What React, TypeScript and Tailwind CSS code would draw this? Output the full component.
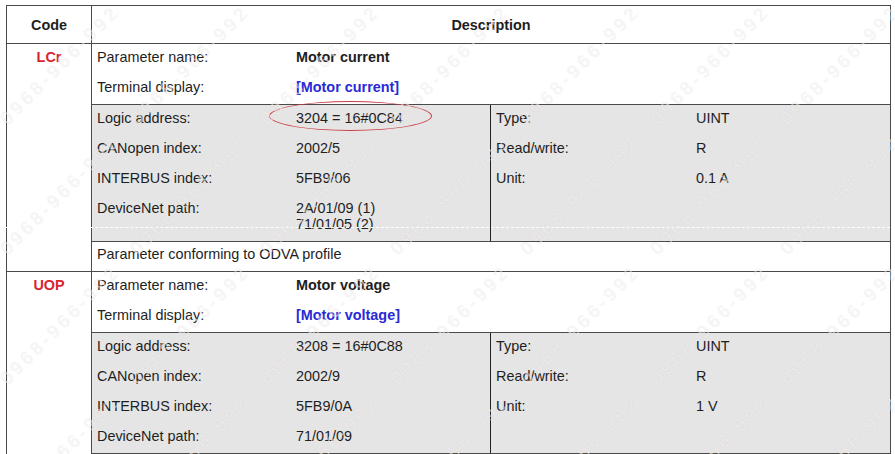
import React from "react";

type Field = { label: string; value: string[] };

type Param = {
  code: string;
  name: string;
  display: string;
  left: Field[];
  right: Field[];
  note?: string;
};

const params: Param[] = [
  {
    code: "LCr",
    name: "Motor current",
    display: "[Motor current]",
    left: [
      { label: "Logic address:", value: ["3204 = 16#0C84"] },
      { label: "CANopen index:", value: ["2002/5"] },
      { label: "INTERBUS index:", value: ["5FB9/06"] },
      { label: "DeviceNet path:", value: ["2A/01/09 (1)", "71/01/05 (2)"] },
    ],
    right: [
      { label: "Type:", value: ["UINT"] },
      { label: "Read/write:", value: ["R"] },
      { label: "Unit:", value: ["0.1 A"] },
    ],
    note: "Parameter conforming to ODVA profile",
  },
  {
    code: "UOP",
    name: "Motor voltage",
    display: "[Motor voltage]",
    left: [
      { label: "Logic address:", value: ["3208 = 16#0C88"] },
      { label: "CANopen index:", value: ["2002/9"] },
      { label: "INTERBUS index:", value: ["5FB9/0A"] },
      { label: "DeviceNet path:", value: ["71/01/09"] },
    ],
    right: [
      { label: "Type:", value: ["UINT"] },
      { label: "Read/write:", value: ["R"] },
      { label: "Unit:", value: ["1 V"] },
    ],
  },
];

function FieldRow({ field, labelWidth }: { field: Field; labelWidth: string }) {
  return (
    <div className={`flex pl-[5px] pt-[5px] ${field.value.length > 1 ? "h-[46px]" : "h-[30px]"}`}>
      <div className={labelWidth}>{field.label}</div>
      <div>
        {field.value.map((v) => (
          <div key={v}>{v}</div>
        ))}
      </div>
    </div>
  );
}

function ParamBlock({ p }: { p: Param }) {
  return (
    <div className="grid grid-cols-[85px_1fr] border-t border-[#4a4a4a]">
      <div className="border-r border-[#4a4a4a] pt-[5px] text-center font-bold text-[#d8262e]">
        {p.code}
      </div>
      <div>
        <div className="flex h-[30px] pl-[5px] pt-[5px]">
          <div className="w-[199px]">Parameter name:</div>
          <div className="font-bold">{p.name}</div>
        </div>
        <div className="flex h-[30px] pl-[5px] pt-[5px]">
          <div className="w-[199px]">Terminal display:</div>
          <div className="font-bold text-[#2a2ad6]">{p.display}</div>
        </div>
        <div className="grid grid-cols-[399px_1fr] border-t border-b border-[#4a4a4a] bg-[#e5e5e5]">
          <div className="border-r border-[#222]">
            {p.left.map((f) => (
              <FieldRow key={f.label} field={f} labelWidth="w-[199px]" />
            ))}
          </div>
          <div>
            {p.right.map((f) => (
              <FieldRow key={f.label} field={f} labelWidth="w-[200px]" />
            ))}
          </div>
        </div>
        {p.note && <div className="h-[29px] pl-[5px] pt-[4px]">{p.note}</div>}
      </div>
    </div>
  );
}

const marks: { x: number; y: number }[] = [];
for (let j = 0; j < 4; j++) {
  for (let i = 0; i < 7; i++) {
    marks.push({ x: 60 + 130 * i, y: 65 + 130 * j });
  }
}

export default function App() {
  return (
    <div className="relative h-[454px] w-[895px] overflow-hidden bg-white font-['Liberation_Sans',Arial,sans-serif] text-[14.4px] leading-[16px] text-[#1e1e1e]">
      <div className="ml-[6px] mt-[5px] w-[885px] border-l border-r border-t border-[#4a4a4a]">
        {/* header */}
        <div className="grid h-[37px] grid-cols-[85px_1fr] font-bold">
          <div className="flex items-center justify-center border-r border-[#4a4a4a]">Code</div>
          <div className="flex items-center justify-center">Description</div>
        </div>
        {params.map((p) => (
          <ParamBlock key={p.code} p={p} />
        ))}
        <div className="grid h-[20px] grid-cols-[85px_1fr] border-t border-[#4a4a4a]">
          <div className="border-r border-[#4a4a4a]" />
          <div />
        </div>
      </div>

      {/* red annotation around the logic address */}
      <div className="pointer-events-none absolute left-[269px] top-[101px] h-[30px] w-[163px] rounded-[50%] border border-[#cc3a42]" />

      {/* page break */}
      <div className="pointer-events-none absolute left-0 right-0 top-[227px] border-t border-dashed border-white" />

      {/* watermark */}
      <div aria-hidden className="pointer-events-none absolute inset-0">
        {marks.map((m) => (
          <div
            key={`${m.x}-${m.y}`}
            className="absolute -translate-x-1/2 -translate-y-1/2 -rotate-45 whitespace-nowrap text-[18px] leading-none tracking-[4px] text-white/50 [text-shadow:0_0_1px_rgba(170,140,140,0.22)]"
            style={{ left: m.x, top: m.y }}
          >
            0968-966-992
          </div>
        ))}
      </div>
    </div>
  );
}
